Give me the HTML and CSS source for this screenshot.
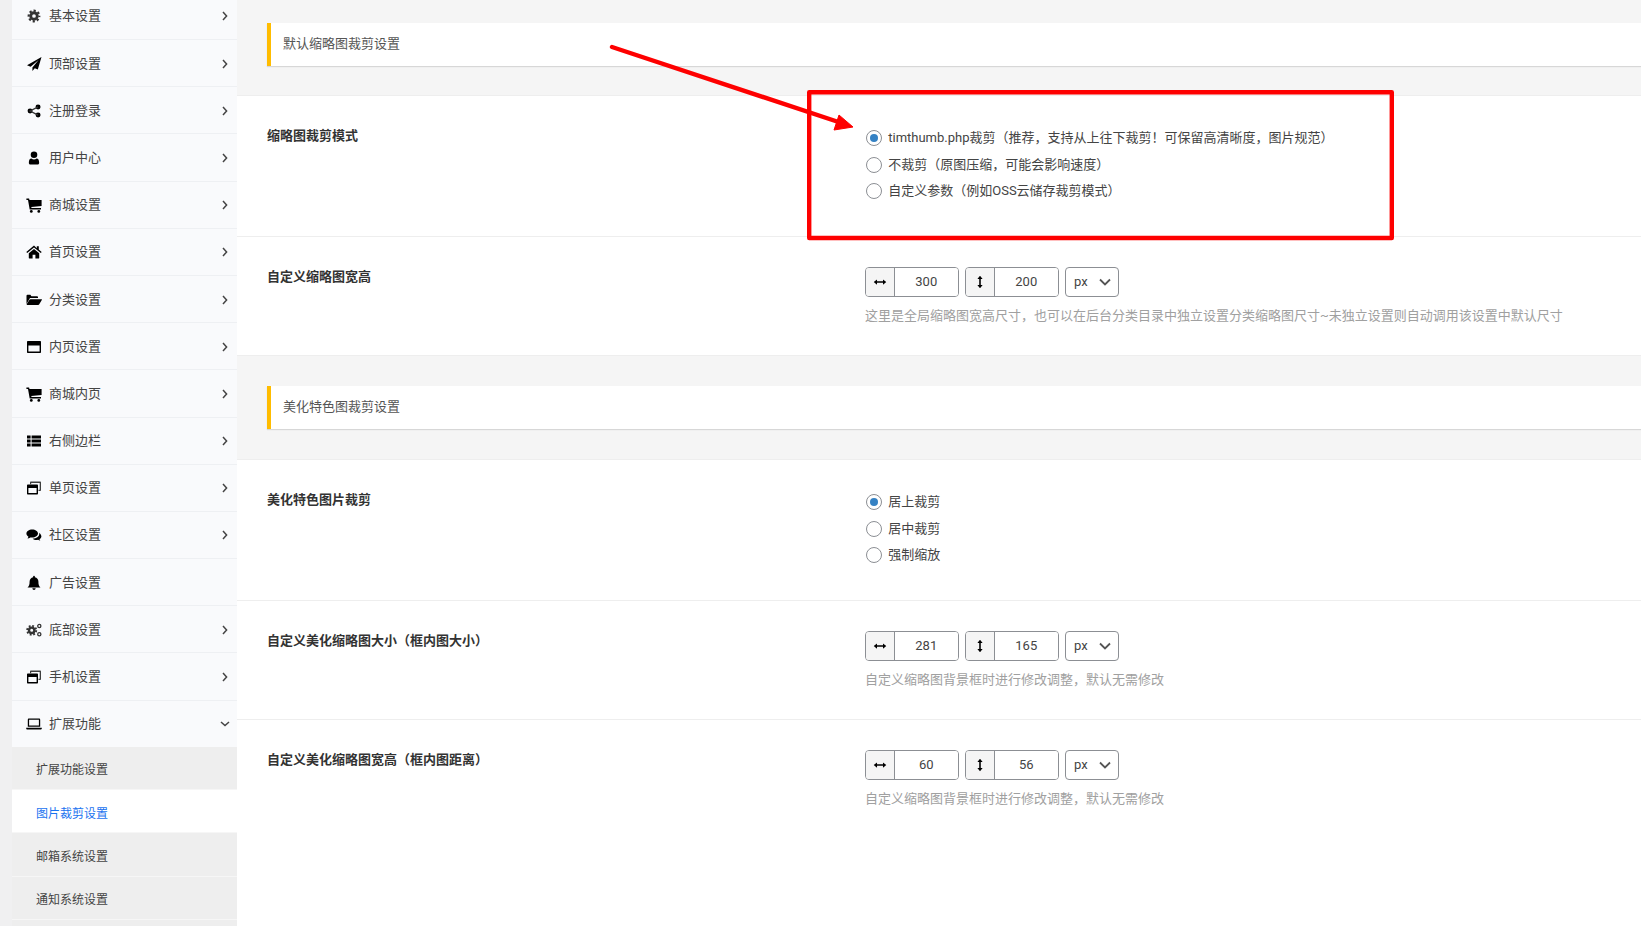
FILE: index.html
```html
<!doctype html>
<html lang="zh-CN">
<head>
<meta charset="utf-8">
<link rel="stylesheet" href="styles.css">
<title>图片裁剪设置</title>
</head>
<body>

<svg class="icon-defs" aria-hidden="true">
    <symbol id="i-cog" viewBox="-1.500 -1.500 19 19"><circle cx="8" cy="8" r="3.900" fill="none" stroke="currentColor" stroke-width="3.400"/><circle cx="8" cy="8" r="6.300" fill="none" stroke="currentColor" stroke-width="2.600" stroke-dasharray="2.600 2.350" stroke-dashoffset="1.300"/></symbol>
    <symbol id="i-plane" viewBox="0 0 16 16"><path d="M15.500 1 1 9.200l3.600 1.500L12.600 4 6.400 11.400V15l2.400-2.700 3 1.300z"/></symbol>
    <symbol id="i-share" viewBox="-1 -1 18 18"><circle cx="12.600" cy="3.400" r="2.800"/><circle cx="3.600" cy="8" r="2.800"/><circle cx="12.600" cy="12.600" r="2.800"/><path d="M12.600 3.400 3.600 8l9 4.600" fill="none" stroke="currentColor" stroke-width="1.500"/></symbol>
    <symbol id="i-user" viewBox="-1 -1 18 18"><circle cx="8" cy="4.400" r="3.700"/><path d="M2.200 13.600c0-3.400 1-5 2.900-5 .8.600 1.800 1 2.900 1s2.100-.4 2.900-1c1.900 0 2.900 1.600 2.900 5 0 1-.7 1.700-1.700 1.700H3.900c-1 0-1.700-.7-1.700-1.700z"/></symbol>
    <symbol id="i-cart" viewBox="0 0 16 16"><path d="M.4 1.500h2.700l.4 1.600h12.100v5.800l-10.300 1.200.2 1h9.500v1.400H3.700L2 3H.4z"/><circle cx="5.300" cy="14.400" r="1.400"/><circle cx="12.800" cy="14.400" r="1.400"/></symbol>
    <symbol id="i-home" viewBox="0 0 16 16"><path d="M8 1.500.3 8l.9 1.100L8 3.400l6.800 5.700.9-1.100-2.900-2.500V2.200h-2v2.100z"/><path d="M8 5 2.800 9.300v4.600c0 .3.200.5.500.5h3.300v-3.600h2.800v3.600h3.300c.3 0 .5-.2.500-.5V9.300z"/></symbol>
    <symbol id="i-folder" viewBox="0 0 16 16"><path d="M.5 12V3.700c0-.5.400-.9.900-.9h3l1 1.400h5.700c.5 0 .9.400.9.900v1H4z"/><path d="M4.500 7.200h10.900c.5 0 .7.400.4.800l-2.700 4.400c-.2.300-.5.500-.9.500H1.200c-.5 0-.7-.4-.4-.8l2.700-4.400c.2-.3.600-.5 1-.5z"/></symbol>
    <symbol id="i-window" viewBox="0 0 16 16"><path fill-rule="evenodd" d="M2 2h12c.6 0 1 .4 1 1v10c0 .6-.4 1-1 1H2c-.6 0-1-.4-1-1V3c0-.6.400-1 1-1zm.4 4.400v6.200h11.200V6.400z"/></symbol>
    <symbol id="i-list" viewBox="0 0 16 16"><path d="M1 2.500h3.600v3H1zM5.600 2.500H15v3H5.600zM1 6.500h3.600v3H1zM5.600 6.500H15v3H5.600zM1 10.500h3.600v3H1zM5.600 10.500H15v3H5.600z"/></symbol>
    <symbol id="i-restore" viewBox="0 0 16 16"><path d="M5 1.500h9c.6 0 1 .4 1 1V10c0 .6-.4 1-1 1h-1.500V9.800h1.200V3H5.200v1.200H4V2.500c0-.6.400-1 1-1z" opacity=".75"/><path fill-rule="evenodd" d="M2 4.500h9c.6 0 1 .4 1 1v8c0 .6-.4 1-1 1H2c-.6 0-1-.4-1-1v-8c0-.6.400-1 1-1zm.4 3.600v5h8.200v-5z"/></symbol>
    <symbol id="i-comments" viewBox="0 0 16 16"><path d="M6.200 2.500C3 2.500.4 4.300.4 6.600c0 1.300.8 2.400 2.100 3.200-.2.600-.5 1.100-1 1.600 1 0 2-.4 2.800-1 .6.100 1.200.2 1.900.2 3.200 0 5.800-1.800 5.800-4 0-2.300-2.600-4.100-5.800-4.100z"/><path d="M13.100 5.700c.2.300.2.700.2 1 0 2.800-3 4.900-6.700 5 .9.800 2.300 1.300 3.900 1.300.5 0 1-.1 1.500-.2.700.500 1.500.8 2.400.9-.4-.4-.7-.9-.9-1.400 1.100-.700 1.900-1.700 1.900-2.800 0-1.600-1-2.900-2.300-3.800z"/></symbol>
    <symbol id="i-bell" viewBox="0 0 16 16"><path d="M8 .8c.5 0 .9.400.9.900v.5c2 .4 3.500 2.200 3.500 4.300 0 3.300.6 4.800 2.100 6H1.500c1.500-1.200 2.100-2.700 2.100-6 0-2.100 1.500-3.900 3.500-4.300v-.5c0-.5.400-.9.900-.9z"/><path d="M6.400 13.300h3.200c0 .9-.7 1.700-1.600 1.700s-1.600-.8-1.600-1.700z"/></symbol>
    <symbol id="i-cogs" viewBox="0 0 16 16"><circle cx="5.700" cy="8.300" r="2.700" fill="none" stroke="currentColor" stroke-width="2.400"/><circle cx="5.700" cy="8.300" r="4.500" fill="none" stroke="currentColor" stroke-width="1.900" stroke-dasharray="1.800 1.730"/><circle cx="13.300" cy="4" r="1.600" fill="none" stroke="currentColor" stroke-width="1.300"/><circle cx="13.300" cy="12.300" r="1.600" fill="none" stroke="currentColor" stroke-width="1.300"/></symbol>
    <symbol id="i-laptop" viewBox="0 0 16 16"><path fill-rule="evenodd" d="M3 2.500h10c.7 0 1.200.5 1.200 1.200v7.100H1.800V3.700c0-.7.500-1.200 1.200-1.200zm.1 1.300v5.700h9.800V3.800z"/><path d="M.2 11.800h15.600v.7c0 .5-.4.9-.9.9H1.100c-.5 0-.9-.4-.9-.9z"/></symbol>
    <symbol id="i-width" viewBox="0 0 16 16"><path d="M.8 8l3.800-3v2.200h6.800V5l3.800 3-3.800 3V8.800H4.600V11z"/></symbol>
    <symbol id="i-height" viewBox="0 0 16 16"><path d="M8 .8l3 3.800H8.900v6.800H11l-3 3.800-3-3.800h2.100V4.600H5z"/></symbol>
    <symbol id="i-right" viewBox="0 0 8 10"><path d="M2 1l3.600 4L2 9" fill="none" stroke="currentColor" stroke-width="1.500"/></symbol>
    <symbol id="i-down" viewBox="0 0 10 8"><path d="M1 2l4 3.600L9 2" fill="none" stroke="currentColor" stroke-width="1.500"/></symbol>
</svg>

<div class="page">

    <nav class="sidebar">
        <a class="nav-item" href="#"><svg class="nav-icon"><use href="#i-cog"/></svg><span class="nav-text">基本设置</span><svg class="nav-arrow"><use href="#i-right"/></svg></a>
        <a class="nav-item" href="#"><svg class="nav-icon"><use href="#i-plane"/></svg><span class="nav-text">顶部设置</span><svg class="nav-arrow"><use href="#i-right"/></svg></a>
        <a class="nav-item" href="#"><svg class="nav-icon"><use href="#i-share"/></svg><span class="nav-text">注册登录</span><svg class="nav-arrow"><use href="#i-right"/></svg></a>
        <a class="nav-item" href="#"><svg class="nav-icon"><use href="#i-user"/></svg><span class="nav-text">用户中心</span><svg class="nav-arrow"><use href="#i-right"/></svg></a>
        <a class="nav-item" href="#"><svg class="nav-icon"><use href="#i-cart"/></svg><span class="nav-text">商城设置</span><svg class="nav-arrow"><use href="#i-right"/></svg></a>
        <a class="nav-item" href="#"><svg class="nav-icon"><use href="#i-home"/></svg><span class="nav-text">首页设置</span><svg class="nav-arrow"><use href="#i-right"/></svg></a>
        <a class="nav-item" href="#"><svg class="nav-icon"><use href="#i-folder"/></svg><span class="nav-text">分类设置</span><svg class="nav-arrow"><use href="#i-right"/></svg></a>
        <a class="nav-item" href="#"><svg class="nav-icon"><use href="#i-window"/></svg><span class="nav-text">内页设置</span><svg class="nav-arrow"><use href="#i-right"/></svg></a>
        <a class="nav-item" href="#"><svg class="nav-icon"><use href="#i-cart"/></svg><span class="nav-text">商城内页</span><svg class="nav-arrow"><use href="#i-right"/></svg></a>
        <a class="nav-item" href="#"><svg class="nav-icon"><use href="#i-list"/></svg><span class="nav-text">右侧边栏</span><svg class="nav-arrow"><use href="#i-right"/></svg></a>
        <a class="nav-item" href="#"><svg class="nav-icon"><use href="#i-restore"/></svg><span class="nav-text">单页设置</span><svg class="nav-arrow"><use href="#i-right"/></svg></a>
        <a class="nav-item" href="#"><svg class="nav-icon"><use href="#i-comments"/></svg><span class="nav-text">社区设置</span><svg class="nav-arrow"><use href="#i-right"/></svg></a>
        <a class="nav-item" href="#"><svg class="nav-icon"><use href="#i-bell"/></svg><span class="nav-text">广告设置</span></a>
        <a class="nav-item" href="#"><svg class="nav-icon"><use href="#i-cogs"/></svg><span class="nav-text">底部设置</span><svg class="nav-arrow"><use href="#i-right"/></svg></a>
        <a class="nav-item" href="#"><svg class="nav-icon"><use href="#i-restore"/></svg><span class="nav-text">手机设置</span><svg class="nav-arrow"><use href="#i-right"/></svg></a>
        <a class="nav-item nav-open" href="#"><svg class="nav-icon"><use href="#i-laptop"/></svg><span class="nav-text">扩展功能</span><svg class="nav-arrow-down"><use href="#i-down"/></svg></a>
        <div class="submenu">
            <a class="sub-item" href="#">扩展功能设置</a>
            <a class="sub-item sub-active" href="#">图片裁剪设置</a>
            <a class="sub-item" href="#">邮箱系统设置</a>
            <a class="sub-item" href="#">通知系统设置</a>
        </div>
    </nav>

    <main class="content">

        <section class="band band-first">
            <h3 class="banner">默认缩略图裁剪设置</h3>
        </section>

        <div class="row row-radios">
            <div class="row-label">缩略图裁剪模式</div>
            <div class="row-field">
                <label class="radio"><input type="radio" name="crop" checked> timthumb.php裁剪（推荐，支持从上往下裁剪！可保留高清晰度，图片规范）</label>
                <label class="radio"><input type="radio" name="crop"> 不裁剪（原图压缩，可能会影响速度）</label>
                <label class="radio"><input type="radio" name="crop"> 自定义参数（例如OSS云储存裁剪模式）</label>
            </div>
        </div>

        <div class="row row-tall">
            <div class="row-label">自定义缩略图宽高</div>
            <div class="row-field">
                <div class="size-group">
                    <div class="size-input"><span class="size-prefix"><svg class="size-icon"><use href="#i-width"/></svg></span><input type="text" value="300"></div>
                    <div class="size-input"><span class="size-prefix"><svg class="size-icon"><use href="#i-height"/></svg></span><input type="text" value="200"></div>
                    <select class="size-unit"><option>px</option></select>
                </div>
                <p class="hint">这里是全局缩略图宽高尺寸，也可以在后台分类目录中独立设置分类缩略图尺寸~未独立设置则自动调用该设置中默认尺寸</p>
            </div>
        </div>

        <section class="band">
            <h3 class="banner">美化特色图裁剪设置</h3>
        </section>

        <div class="row row-radios">
            <div class="row-label">美化特色图片裁剪</div>
            <div class="row-field">
                <label class="radio"><input type="radio" name="feature" checked> 居上裁剪</label>
                <label class="radio"><input type="radio" name="feature"> 居中裁剪</label>
                <label class="radio"><input type="radio" name="feature"> 强制缩放</label>
            </div>
        </div>

        <div class="row row-tall">
            <div class="row-label">自定义美化缩略图大小（框内图大小）</div>
            <div class="row-field">
                <div class="size-group">
                    <div class="size-input"><span class="size-prefix"><svg class="size-icon"><use href="#i-width"/></svg></span><input type="text" value="281"></div>
                    <div class="size-input"><span class="size-prefix"><svg class="size-icon"><use href="#i-height"/></svg></span><input type="text" value="165"></div>
                    <select class="size-unit"><option>px</option></select>
                </div>
                <p class="hint">自定义缩略图背景框时进行修改调整，默认无需修改</p>
            </div>
        </div>

        <div class="row row-last">
            <div class="row-label">自定义美化缩略图宽高（框内图距离）</div>
            <div class="row-field">
                <div class="size-group">
                    <div class="size-input"><span class="size-prefix"><svg class="size-icon"><use href="#i-width"/></svg></span><input type="text" value="60"></div>
                    <div class="size-input"><span class="size-prefix"><svg class="size-icon"><use href="#i-height"/></svg></span><input type="text" value="56"></div>
                    <select class="size-unit"><option>px</option></select>
                </div>
                <p class="hint">自定义缩略图背景框时进行修改调整，默认无需修改</p>
            </div>
        </div>

    </main>

</div>

<!-- red markup drawn over the screenshot -->
<svg class="markup" viewBox="0 0 1641 926" aria-hidden="true">
    <rect x="809.200" y="92.200" width="582.600" height="145.800" fill="none" stroke="#fe0000" stroke-width="4.400" stroke-linejoin="round"/>
    <path d="M612 47 843 123.500" fill="none" stroke="#fe0000" stroke-width="4.400" stroke-linecap="round"/>
    <path d="M839 115 853 127 834 130z" fill="#fe0000" stroke="#fe0000" stroke-linejoin="round"/>
</svg>

</body>
</html>
```

FILE: styles.css
```css
html
{
    height:100%;
    overflow:hidden;
}
body
{
    position:relative;
    margin:0;
    height:100%;
    overflow:hidden;
    background:#f0f0f1;
    color:#444;
    font:normal normal 13px/20px Roboto, "Noto Sans CJK SC", sans-serif;
}
a
{
    text-decoration:none;
}
.icon-defs
{
    display:none;
}
.page
{
    display:flex;
    padding-left:12px;
    height:100%;
}

/* left menu, the page is scrolled down a little */
.sidebar
{
    flex:0 0 225px;
    margin-top:-7.2px;
    background:#f9fafc;
}
.nav-item
{
    display:flex;
    align-items:center;
    box-sizing:border-box;
    height:47.2px;
    padding:1px 8.500px 0 14px;
    border-bottom:1px solid #eef0f3;
    color:#444;
}
.nav-open
{
    height:45.9px;
    border-bottom:none;
}
.nav-icon
{
    flex:none;
    width:16px;
    height:16px;
    margin-right:7px;
    color:#333;
}
.nav-text
{
    flex:1;
}
.nav-arrow
{
    flex:none;
    width:8px;
    height:10px;
    color:#444;
}
.nav-arrow-down
{
    flex:none;
    width:10px;
    height:8px;
    margin-right:-1px;
    color:#444;
}
.submenu
{
    padding-bottom:12px;
    background:#eee;
}
.sub-item
{
    display:flex;
    align-items:center;
    box-sizing:border-box;
    height:43.35px;
    padding:5px 0 0 24px;
    border-bottom:1px solid #f6f6f6;
    font-size:12px;
    color:#444;
}
.sub-active
{
    background:#fff;
    color:#1a73f0;
}

/* main column */
.content
{
    flex:1;
    min-width:0;
    background:#fff;
}
.band
{
    padding:30px 0;
    background:#f5f5f5;
    border-bottom:1px solid #eee;
}
.band-first
{
    padding:23px 0 29px;
}
.banner
{
    box-sizing:border-box;
    height:43px;
    margin:0 0 0 30px;
    padding-left:12px;
    border-left:4px solid #ffbc00;
    background:#fff;
    box-shadow:0 1px 1px rgba(0,0,0,.12);
    font:inherit;
    line-height:41px;
    color:#555;
}
.row
{
    display:flex;
    box-sizing:border-box;
    height:118px;
    padding:29px 0 0 30px;
    border-bottom:1px solid #eee;
}
.row-tall
{
    height:119px;
}
.row-radios
{
    height:141px;
}
.row-last
{
    border-bottom:none;
}
.row-label
{
    flex:0 0 598px;
    padding-top:1px;
    font-weight:bold;
    color:#333;
}
.row-field
{
    flex:1;
    min-width:0;
    padding-top:1px;
}
.row-radios .row-field
{
    padding-top:0;
}
.radio
{
    display:flex;
    align-items:center;
    height:26.5px;
    white-space:pre;
}
.radio input
{
    appearance:none;
    box-sizing:border-box;
    flex:none;
    display:flex;
    align-items:center;
    justify-content:center;
    width:16px;
    height:16px;
    margin:0 3px 0 1px;
    border:1px solid #8c8f94;
    border-radius:50%;
    background:#fff;
}
.radio input:checked::before
{
    content:"";
    width:8px;
    height:8px;
    border-radius:50%;
    background:#3582c4;
}
.size-group
{
    display:flex;
    gap:6.500px;
}
.size-input
{
    display:flex;
    box-sizing:border-box;
    width:93.500px;
    height:30px;
    border:1px solid #8c8f94;
    border-radius:4px;
    overflow:hidden;
}
.size-prefix
{
    display:flex;
    align-items:center;
    justify-content:center;
    flex:none;
    width:28px;
    border-right:1px solid #8c8f94;
    background:#f5f5f5;
}
.size-icon
{
    width:14px;
    height:14px;
    color:#555;
}
.size-input input
{
    flex:1;
    min-width:0;
    border:none;
    padding:0;
    outline:none;
    background:#fff;
    font:inherit;
    color:#444;
    text-align:center;
}
.size-unit
{
    appearance:none;
    box-sizing:border-box;
    width:53.500px;
    height:30px;
    padding:0 0 0 8px;
    border:1px solid #8c8f94;
    border-radius:4px;
    background:#fff url('data:image/svg+xml;utf8,<svg xmlns="http://www.w3.org/2000/svg" width="12" height="8"><path d="M1 1.500l5 5 5-5" fill="none" stroke="%23555" stroke-width="1.800"/></svg>') no-repeat right 7px center;
    font:inherit;
    color:#444;
}
.hint
{
    margin:9px 0 0;
    color:#a0a0a0;
    white-space:nowrap;
}

.markup
{
    position:absolute;
    left:0;
    top:0;
    width:1641px;
    height:926px;
    pointer-events:none;
}
```
